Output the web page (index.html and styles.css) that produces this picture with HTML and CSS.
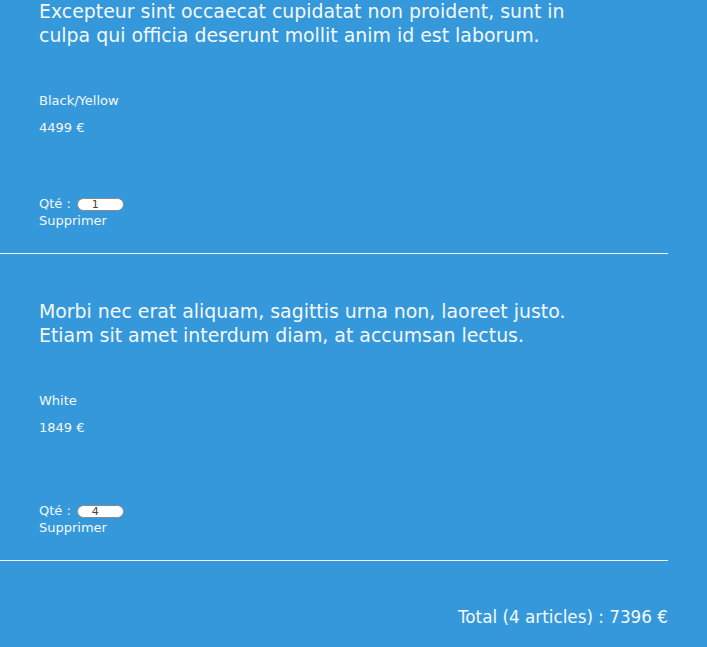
FILE: index.html
```html
<!DOCTYPE html>
<html lang="fr">
<head>
<meta charset="utf-8">
<title>Panier</title>
<link rel="stylesheet" href="styles.css">
</head>
<body>
<div class="cart">
  <div class="item item--first">
    <p class="desc">Excepteur sint occaecat cupidatat non proident, sunt in<br>culpa qui officia deserunt mollit anim id est laborum.</p>
    <p class="color">Black/Yellow</p>
    <p class="price">4499 €</p>
    <div class="qty"><span>Qté :</span><input class="qty-input" type="text" value="1"></div>
    <p class="remove">Supprimer</p>
  </div>
  <div class="item">
    <p class="desc">Morbi nec erat aliquam, sagittis urna non, laoreet justo.<br>Etiam sit amet interdum diam, at accumsan lectus.</p>
    <p class="color">White</p>
    <p class="price">1849 €</p>
    <div class="qty"><span>Qté :</span><input class="qty-input" type="text" value="4"></div>
    <p class="remove">Supprimer</p>
  </div>
  <p class="total">Total (4 articles) : 7396 €</p>
</div>
</body>
</html>
```
FILE: styles.css
```css
html, body {
  margin: 0;
  padding: 0;
  background: #3498db;
  height: 100%;
  overflow: hidden;
}
body {
  font-family: "DejaVu Sans", "Open Sans", sans-serif;
  color: #f4f8fc;
}
.cart {
  width: 668px;
  margin-top: -46px;
}
.item {
  padding: 45px 0 24px 39px;
  border-bottom: 1px solid #f4f8fc;
}
p { margin: 0; }
.desc {
  font-size: 18.9px;
  line-height: 24px;
}
.color {
  margin-top: 46px;
  font-size: 13px;
  line-height: 16px;
}
.price {
  margin-top: 11px;
  font-size: 13px;
  line-height: 16px;
}
.qty {
  margin-top: 67px;
  display: flex;
  align-items: center;
  gap: 6px;
  font-size: 13px;
  line-height: 16px;
  height: 16px;
}
.item--first .qty {
  margin-top: 60px;
}
.qty-input {
  box-sizing: border-box;
  width: 47px;
  height: 13px;
  border: 1px solid #8a8a8a;
  border-radius: 7px;
  background: #fff;
  padding: 0 0 0 14px;
  font-family: inherit;
  font-size: 11px;
  color: #444;
  outline: none;
}
.remove {
  margin-top: 1px;
  font-size: 13px;
  line-height: 16px;
}
.total {
  margin-top: 44px;
  text-align: right;
  font-size: 16.8px;
  line-height: 24px;
}
```
